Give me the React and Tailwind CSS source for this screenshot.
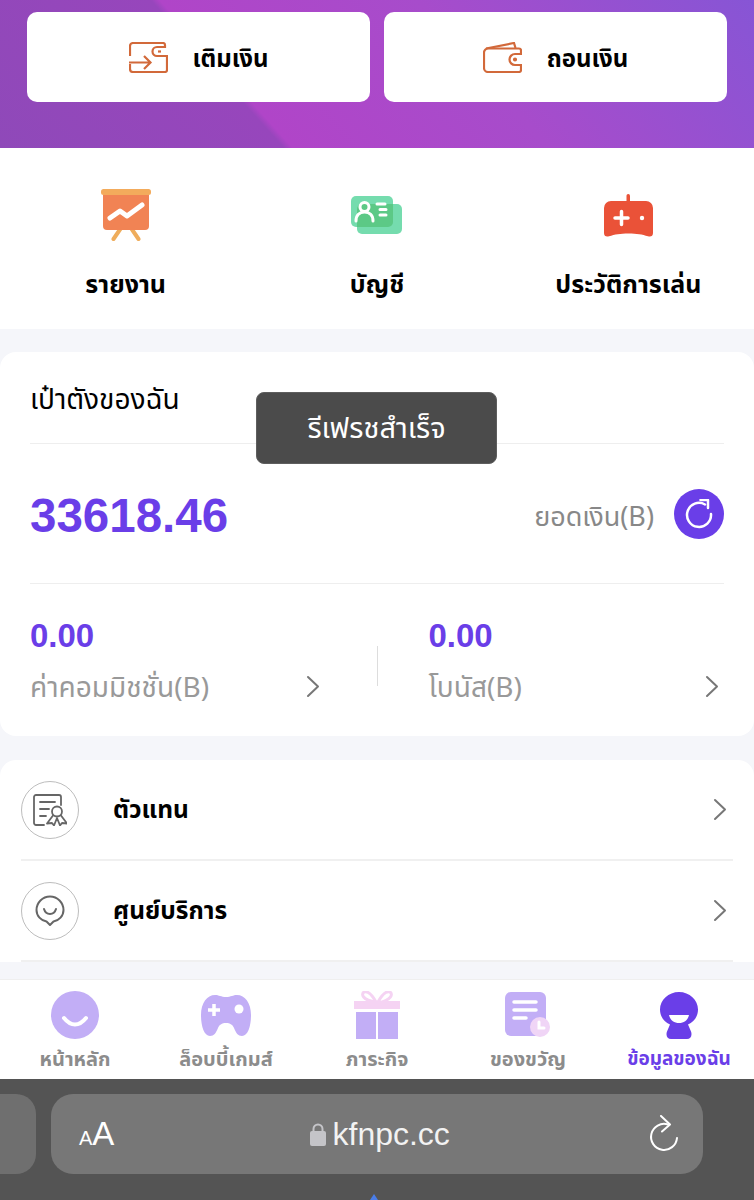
import React from 'react';

const FONT = 'font-["Noto_Sans_Thai","Liberation_Sans","Noto_Sans",sans-serif]';

function Chevron() {
  return (
    <svg width="14" height="23" viewBox="0 0 14 23" fill="none" stroke="#777" strokeWidth="2" strokeLinecap="round" strokeLinejoin="round">
      <path d="M2 2l10 9.500L2 21" />
    </svg>
  );
}

function TopUpIcon() {
  return (
    <svg width="39" height="31" viewBox="0 0 39 31" fill="none" stroke="#d2693a" strokeWidth="2.200">
      <path d="M1 14V4a3 3 0 0 1 3-3h30a2 2 0 0 1 2 2v2H28a4.500 4.500 0 0 0 0 9h10v14a2 2 0 0 1-2 2H4a3 3 0 0 1-3-3v-5" />
      <path d="M0 20.500h21M15 14l6.500 6.500L15 27" />
      <path d="M29 9.500h3" />
    </svg>
  );
}

function WalletIcon() {
  return (
    <svg width="39" height="31" viewBox="0 0 39 31" fill="none" stroke="#d2693a" strokeWidth="2.200">
      <path d="M3 6.500 31 1l1.500 5" />
      <path d="M38 12V8.500a2 2 0 0 0-2-2H5a4 4 0 0 0-4 4V26a4 4 0 0 0 4 4h31a2 2 0 0 0 2-2v-5h-6a5.500 5.500 0 0 1 0-11h6z" />
      <circle cx="32" cy="17.500" r="1" fill="#d2693a" />
    </svg>
  );
}

function ReportIcon() {
  return (
    <svg width="50" height="52" viewBox="0 0 50 52" fill="none">
      <path d="M20 39 12.500 50M30 39l7.500 11" stroke="#efad5c" strokeWidth="4" strokeLinecap="round" />
      <path d="M2 3h46v34a4 4 0 0 1-4 4H6a4 4 0 0 1-4-4z" fill="#f18354" />
      <rect width="50" height="6" rx="2.500" fill="#f3ab5c" />
      <path d="M9 29l10-7 7 5 15-11" stroke="#fff" strokeWidth="5" strokeLinecap="round" strokeLinejoin="round" />
    </svg>
  );
}

function AccountIcon() {
  return (
    <svg width="51" height="38" viewBox="0 0 51 38" fill="none">
      <rect width="42" height="31" rx="5" fill="#75dcae" />
      <rect x="6" y="8" width="45" height="30" rx="5" fill="#75dcae" />
      <path d="M6 13a5 5 0 0 1 5-5h31v18a5 5 0 0 1-5 5H6z" fill="#5cc986" />
      <circle cx="13.500" cy="11" r="4.500" stroke="#fff" strokeWidth="3" />
      <path d="M5 25c0-6 3.500-9 8.500-9s8.500 3 8.500 9" stroke="#fff" strokeWidth="3" strokeLinecap="round" />
      <path d="M26 8h8M29 13.500h6M29 19h6" stroke="#fff" strokeWidth="3" strokeLinecap="round" />
    </svg>
  );
}

function GamepadIcon() {
  return (
    <svg width="49" height="43" viewBox="0 0 49 43">
      <rect x="22.500" width="3.500" height="9" rx="1.700" fill="#ea5238" />
      <path d="M7 7h35a7 7 0 0 1 7 7v25c0 3-2 4-5 3.300-6-1.800-11-2.800-19.500-2.800S11 40.500 5 42.300C2 43 0 42 0 39V14a7 7 0 0 1 7-7z" fill="#ea5238" />
      <path d="M11 24h13M17.500 17.500v13" stroke="#fff" strokeWidth="3.500" strokeLinecap="round" />
      <circle cx="38" cy="24" r="2.200" fill="#fff" />
    </svg>
  );
}

function AgentIcon() {
  return (
    <svg width="34" height="32" viewBox="0 0 34 32" fill="none" stroke="#666" strokeWidth="1.800" strokeLinecap="round">
      <path d="M11 31H3a2 2 0 0 1-2-2V3a2 2 0 0 1 2-2h23a2 2 0 0 1 2 2v8" />
      <path d="M7 8h15M7 15h9M7 22h6" />
      <circle cx="24" cy="17.500" r="5" />
      <path d="M20 21.500l-6 8 5-.500 2 2.500 3-7.500 3 7.500 2-2.500 5 .500-6-8" strokeLinejoin="round" />
    </svg>
  );
}

function ServiceIcon() {
  return (
    <svg width="30" height="32" viewBox="0 0 30 32" fill="none" stroke="#666" strokeWidth="2" strokeLinecap="round">
      <path d="M15 30l-3.500-3.500C6 25.500 1.500 21 1.500 15a13.500 13.500 0 0 1 27 0c0 6-4.500 10.500-10 11.500z" strokeLinejoin="round" />
      <path d="M9 14c1 3.500 3 5 6 5s5-1.500 6-5" />
    </svg>
  );
}

function NavHome() {
  return (
    <svg width="48" height="48" viewBox="0 0 48 48">
      <circle cx="24" cy="24" r="24" fill="#c2aef6" />
      <path d="M13 27c4 5 7 6.500 11 6.500S31 32 35 27" fill="none" stroke="#fff" strokeWidth="4" strokeLinecap="round" />
    </svg>
  );
}

function NavGames() {
  return (
    <svg width="50" height="42" viewBox="0 0 50 42">
      <path d="M14 1c4 0 6 2 11 2s7-2 11-2c8 0 14 8 14 20 0 11-3 21-9 21-4 0-6-3-8-8-1-3-4-5-8-5s-7 2-8 5c-2 5-4 8-8 8-6 0-9-10-9-21C0 9 6 1 14 1z" fill="#c2aef6" />
      <path d="M7 16h12M13 10v12" stroke="#fff" strokeWidth="3.500" />
      <circle cx="38" cy="15" r="4.500" fill="#fff" />
    </svg>
  );
}

function NavGift() {
  return (
    <svg width="46" height="48" viewBox="0 0 46 48">
      <path d="M22 11C17 2 13 0 10 1 7 3 8 9 22 11zM24 11c5-9 9-11 12-10 3 2 2 8-12 11z" fill="none" stroke="#f5d3f3" strokeWidth="3" />
      <rect y="10" width="46" height="8" fill="#f5d3f3" />
      <rect x="2" y="21" width="20" height="27" fill="#c2aef6" />
      <rect x="24" y="21" width="20" height="27" fill="#c2aef6" />
    </svg>
  );
}

function NavGifts() {
  return (
    <svg width="46" height="46" viewBox="0 0 46 46">
      <rect width="41" height="44" rx="6" fill="#c2aef6" />
      <path d="M9 10h22M9 18h22M9 26h12" stroke="#fff" strokeWidth="3.500" strokeLinecap="round" />
      <circle cx="35" cy="35" r="10" fill="#f0d5f6" />
      <path d="M34 30v6h5" fill="none" stroke="#fff" strokeWidth="3" strokeLinecap="round" />
    </svg>
  );
}

function NavMine() {
  return (
    <svg width="38" height="47" viewBox="0 0 38 47">
      <path d="M19 0c10.500 0 19 8 19 17.500 0 7-4 12.500-10 15l3 7c1.500 4-.5 7.500-4 7.500H11c-3.500 0-5.500-3.500-4-7.500l3-7C4 30 0 24.500 0 17.500 0 8 8.500 0 19 0z" fill="#6a3ee8" />
      <path d="M9 23h20c-1 5-5 8-10 8s-9-3-10-8z" fill="#fff" />
    </svg>
  );
}

function MenuTile({ icon, label }) {
  return (
    <div className="flex flex-col items-center">
      <div className="flex h-[54px] items-center justify-center">{icon}</div>
      <span className="mt-[27px] text-[25px] font-bold leading-8 text-black">{label}</span>
    </div>
  );
}

function ListRow({ icon, label }) {
  return (
    <div className="flex h-[101px] items-center border-b-2 border-[#f0f0f0] pr-[6px]">
      <div className="flex h-[58px] w-[58px] items-center justify-center rounded-full border border-[#bdbdbd]">{icon}</div>
      <span className="ml-[34px] flex-1 pt-[3px] text-[24.5px] font-bold text-black">{label}</span>
      <Chevron />
    </div>
  );
}

function NavItem({ icon, label, active }) {
  return (
    <div className="flex w-[150px] flex-col items-center">
      <div className="flex h-[48px] items-center justify-center">{icon}</div>
      <span className={`mt-[9px] font-bold leading-6 ${active ? 'text-[19px] text-[#6a3ee8]' : 'text-[20px] text-[#8c8c8c]'}`}>{label}</span>
    </div>
  );
}

function SubBalance({ label, className }) {
  return (
    <div className={`flex items-center justify-between ${className}`}>
      <div>
        <div className="font-['Liberation_Sans',sans-serif] text-[33px] font-bold leading-9 text-[#6a3ee8]">0.00</div>
        <div className="mt-[19px] text-[28px] leading-8 text-[#999999]">{label}</div>
      </div>
      <div className="mt-[50px]">
        <Chevron />
      </div>
    </div>
  );
}

export default function App() {
  return (
    <div className={`relative flex h-[1200px] flex-col overflow-hidden bg-[#f5f6fa] ${FONT}`}>
      {/* Wallet header */}
      <div className="flex h-[148px] shrink-0 gap-[14px] bg-[linear-gradient(48deg,#8f49b9_0%,#9746bc_32%,#b045c8_33%,#a74ccb_62%,#8755d5_100%)] px-[27px] pt-[12px]">
        <div className="flex h-[90px] flex-1 items-center justify-center gap-[25px] rounded-[10px] bg-white">
          <TopUpIcon />
          <span className="pt-[5px] text-2xl font-bold text-black">เติมเงิน</span>
        </div>
        <div className="flex h-[90px] flex-1 items-center justify-center gap-[25px] rounded-[10px] bg-white">
          <WalletIcon />
          <span className="pt-[5px] text-2xl font-bold text-black">ถอนเงิน</span>
        </div>
      </div>

      {/* Shortcuts */}
      <div className="grid h-[181px] shrink-0 grid-cols-3 bg-white pt-[40px]">
        <MenuTile icon={<ReportIcon />} label="รายงาน" />
        <MenuTile icon={<AccountIcon />} label="บัญชี" />
        <MenuTile icon={<GamepadIcon />} label="ประวัติการเล่น" />
      </div>

      <main className="min-h-0 flex-1 overflow-hidden pt-[23px]">
        {/* Balance card */}
        <section className="h-[384px] rounded-[16px] bg-white px-[30px]">
          <div className="flex h-[92px] items-center border-b border-[#eeeeee] pt-[6px]">
            <span className="text-[28px] text-black">เป๋าตังของฉัน</span>
          </div>
          <div className="flex h-[140px] items-center justify-between border-b border-[#eeeeee]">
            <span className="pt-[4px] font-['Liberation_Sans',sans-serif] text-[47.5px] font-bold text-[#6a3ee8]">33618.46</span>
            <div className="flex items-center gap-[20px]">
              <span className="pt-[10px] text-[27px] text-[#888888]">ยอดเงิน(B)</span>
              <div className="flex h-[50px] w-[50px] items-center justify-center rounded-full bg-[#6a3ee8]">
                <svg width="30" height="30" viewBox="0 0 30 30" fill="none" stroke="#fff" strokeWidth="2.500" strokeLinecap="round" strokeLinejoin="round">
                  <path d="M21 5.500A12 12 0 1 0 27 15" />
                  <path d="M16.500 1h7.500v8" />
                </svg>
              </div>
            </div>
          </div>
          <div className="grid grid-cols-[1fr_1px_1fr] items-center pt-[34px]">
            <SubBalance label="ค่าคอมมิชชั่น(B)" className="pr-[57px]" />
            <div className="mt-[8px] h-[40px] bg-[#dddddd]" />
            <SubBalance label="โบนัส(B)" className="pl-[51px] pr-[5px]" />
          </div>
        </section>

        {/* Links */}
        <section className="mt-[24px] rounded-t-[16px] bg-white px-[21px]">
          <ListRow icon={<AgentIcon />} label="ตัวแทน" />
          <ListRow icon={<ServiceIcon />} label="ศูนย์บริการ" />
        </section>
      </main>

      {/* Tab bar */}
      <nav className="flex h-[100px] shrink-0 items-start justify-between border-t border-[#efefef] bg-white pt-[11px]">
        <NavItem icon={<NavHome />} label="หน้าหลัก" />
        <NavItem icon={<NavGames />} label="ล็อบบี้เกมส์" />
        <NavItem icon={<NavGift />} label="ภาระกิจ" />
        <NavItem icon={<NavGifts />} label="ของขวัญ" />
        <NavItem icon={<NavMine />} label="ข้อมูลของฉัน" active />
      </nav>

      {/* Safari toolbar */}
      <div className="relative flex h-[121px] shrink-0 gap-[15px] bg-[#545454] pt-[15px]">
        <div className="h-[80px] w-[36px] rounded-r-[20px] bg-[#6f6f6f]" />
        <div className="flex h-[80px] w-[652px] items-center justify-between rounded-[22px] bg-[#777777] pl-[28px] pr-[24px] font-['Liberation_Sans',sans-serif] text-white">
          <span className="flex items-baseline">
            <span className="text-xl">A</span>
            <span className="text-[33px]">A</span>
          </span>
          <span className="-ml-[3px] flex items-center gap-[6px] text-[32px] text-[#f2f2f2]">
            <svg width="16" height="24" viewBox="0 0 16 24">
              <path d="M3.500 10V7a4.500 4.500 0 0 1 9 0v3" fill="none" stroke="#c4c4c8" strokeWidth="2" />
              <rect y="9" width="16" height="15" rx="2" fill="#c4c4c8" />
            </svg>
            kfnpc.cc
          </span>
          <svg width="30" height="38" viewBox="0 0 30 38" fill="none" stroke="#fff" strokeWidth="2" strokeLinecap="round" strokeLinejoin="round">
            <path d="M19 9.500A13 13 0 1 0 28 23" />
            <path d="M12 1l9 8.500-8 7" />
          </svg>
        </div>
        <div className="absolute bottom-0 left-[370px] h-0 w-0 border-x-[4px] border-b-[6px] border-x-transparent border-b-[#4a7de8]" />
      </div>

      {/* Toast */}
      <div className="absolute left-[256px] top-[392px] flex h-[72px] w-[241px] items-center justify-center rounded-[8px] border border-[#5e5e5e] bg-[#4b4b4b] pt-[3px] text-[29px] text-white">
        รีเฟรชสำเร็จ
      </div>
    </div>
  );
}
